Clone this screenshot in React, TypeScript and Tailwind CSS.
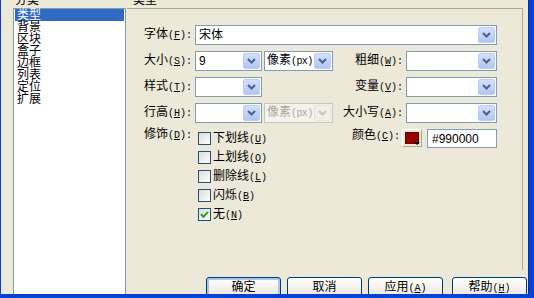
import React from "react";

function Mn({ t, k, colon = true }: { t: string; k: string; colon?: boolean }) {
  return (
    <span className="whitespace-nowrap">
      {t}
      <span className="font-['Liberation_Mono',monospace] text-[10px]">
        (<span className="underline">{k}</span>){colon ? ":" : ""}
      </span>
    </span>
  );
}

function Chevron({ color }: { color: string }) {
  return (
    <svg width="9" height="6" viewBox="0 0 9 6">
      <path d="M1 1 L4.5 4.5 L8 1" fill="none" stroke={color} strokeWidth="2" />
    </svg>
  );
}

function Select({ cls, value, disabled }: { cls: string; value?: React.ReactNode; disabled?: boolean }) {
  return (
    <div
      className={`${cls} h-[20px] flex border ${
        disabled ? "border-[#C9C7BA] bg-[#F4F3EE]" : "border-[#7F9DB9] bg-white"
      }`}
    >
      <div
        className={`flex-1 min-w-0 flex items-center pl-[3px] text-[12px] leading-[12px] overflow-hidden whitespace-nowrap ${
          disabled ? "text-[#ACA899]" : "text-black"
        }`}
      >
        {value}
      </div>
      <div
        className={`w-[17px] shrink-0 m-[1px] rounded-[2px] flex items-center justify-center ${
          disabled
            ? "bg-[#F1F0EA] border border-[#E4E3DC]"
            : "bg-gradient-to-b from-[#D3E0FD] to-[#B1C6F6] border border-[#BBCDF7]"
        }`}
      >
        <Chevron color={disabled ? "#C9C7BA" : "#4D6185"} />
      </div>
    </div>
  );
}

function Label({ t, k }: { t: string; k: string }) {
  return (
    <div className="w-[66px] pr-[1px] text-right text-[12px] leading-[12px] whitespace-nowrap">
      <Mn t={t} k={k} />
    </div>
  );
}

function RLabel({ t, k, cls }: { t: string; k: string; cls: string }) {
  return (
    <div className={`${cls} text-right text-[12px] leading-[12px] whitespace-nowrap`}>
      <Mn t={t} k={k} />
    </div>
  );
}

function Check({ label, k, checked }: { label: string; k: string; checked?: boolean }) {
  return (
    <div className="h-[19px] flex items-center">
      <div className="w-[13px] h-[13px] border border-[#1C5180] bg-gradient-to-br from-[#DCDCD7] to-white flex items-center justify-center">
        {checked && (
          <svg width="9" height="9" viewBox="0 0 9 9">
            <path d="M1 4.2 L3.5 6.8 L8 1.8" fill="none" stroke="#21A121" strokeWidth="2" />
          </svg>
        )}
      </div>
      <span className="ml-[2px] text-[12px] leading-[12px]">
        <Mn t={label} k={k} colon={false} />
      </span>
    </div>
  );
}

function Btn({ children, def, cls }: { children: React.ReactNode; def?: boolean; cls: string }) {
  return (
    <div
      className={`${cls} w-[75px] h-[23px] shrink-0 rounded-[3px] border border-[#003C74] bg-gradient-to-b from-white to-[#E6E4DA] flex justify-center pt-[3px] text-[12px] leading-[12px] ${
        def ? "shadow-[inset_0_0_0_2px_#A9C4EF]" : ""
      }`}
    >
      {children}
    </div>
  );
}

const units = (
  <span className="ml-[-1px]">
    像素<span className="font-['Liberation_Mono',monospace] text-[10px] tracking-[-0.6px]">(px)</span>
  </span>
);

export default function App() {
  const items = ["类型", "背景", "区块", "盒子", "边框", "列表", "定位", "扩展"];
  return (
    <div className="w-[534px] h-[298px] bg-[#ECE9D8] flex flex-col overflow-hidden text-black font-['Liberation_Sans','Noto_Sans_CJK_SC',sans-serif]">
      <div className="flex h-[294px]">
        <div className="w-[1px] bg-[#0842D5]" />
        <div className="flex-1 flex">
          {/* left column */}
          <div className="w-[125px] pl-[12px] flex flex-col">
            <div className="h-[12px] mt-[-6px] mb-[2px] pl-[2px] text-[12px] leading-[12px]">分类</div>
            <div className="flex-1 mb-[-2px] border border-[#7F9DB9] bg-white">
              {items.map((it, i) => (
                <div
                  key={it}
                  className={`h-[12px] mx-[1px] pl-[2px] text-[12px] leading-[12px] ${
                    i === 0 ? "bg-[#316AC5] text-white" : "text-black"
                  }`}
                >
                  {it}
                </div>
              ))}
            </div>
          </div>
          {/* right column */}
          <div className="flex-1 flex flex-col">
            <div className="h-[12px] mt-[-6px] mb-[2px] pl-[7px] text-[12px] leading-[12px]">类型</div>
            <div className="ml-[1px] w-[396px] h-[262px] border-t border-r border-[#ACA899] pt-[16px] flex flex-col gap-[6px]">
              <div className="flex items-center h-[20px]">
                <Label t="字体" k="F" />
                <Select cls="ml-[2px] w-[302px]" value="宋体" />
              </div>
              <div className="flex items-center h-[20px]">
                <Label t="大小" k="S" />
                <Select cls="ml-[2px] w-[67px]" value="9" />
                <Select cls="ml-[2px] w-[69px]" value={units} />
                <RLabel t="粗细" k="W" cls="w-[70px]" />
                <Select cls="ml-[3px] w-[91px]" />
              </div>
              <div className="flex items-center h-[20px]">
                <Label t="样式" k="T" />
                <Select cls="ml-[2px] w-[67px]" />
                <div className="w-[71px]" />
                <RLabel t="变量" k="V" cls="w-[70px]" />
                <Select cls="ml-[3px] w-[91px]" />
              </div>
              <div className="flex items-center h-[20px]">
                <Label t="行高" k="H" />
                <Select cls="ml-[2px] w-[67px]" />
                <Select cls="ml-[2px] w-[69px]" value={units} disabled />
                <RLabel t="大小写" k="A" cls="w-[70px]" />
                <Select cls="ml-[3px] w-[91px]" />
              </div>
              <div className="flex items-start">
                <div className="h-[12px] flex items-center">
                  <Label t="修饰" k="D" />
                </div>
                <div className="ml-[5px] w-[135px] flex flex-col">
                  <Check label="下划线" k="U" />
                  <Check label="上划线" k="O" />
                  <Check label="删除线" k="L" />
                  <Check label="闪烁" k="B" />
                  <Check label="无" k="N" checked />
                </div>
                <div className="h-[14px] flex items-center">
                  <RLabel t="颜色" k="C" cls="w-[67px]" />
                </div>
                <div className="ml-[2px] w-[20px] h-[18px] relative border border-t-white border-l-white border-r-[#ACA899] border-b-[#ACA899] bg-[#ECE9D8]">
                  <div className="ml-[2px] mt-[2px] w-[14px] h-[12px] bg-[#990000] border border-[#6B0000]" />
                  <div className="absolute right-[1px] bottom-[1px] w-0 h-0 border-l-[3px] border-r-[3px] border-t-[3px] border-l-transparent border-r-transparent border-t-black" />
                </div>
                <div className="ml-[5px] w-[70px] h-[19px] border border-[#7F9DB9] bg-white flex items-center pl-[4px] text-[12px] leading-[12px]">
                  #990000
                </div>
              </div>
            </div>
            <div className="mt-[7px] h-[17px] overflow-hidden flex items-start pl-[80px]">
              <Btn cls="" def>确定</Btn>
              <Btn cls="ml-[6px]">取消</Btn>
              <Btn cls="ml-[6px]">
                <Mn t="应用" k="A" colon={false} />
              </Btn>
              <Btn cls="ml-[9px]">
                <Mn t="帮助" k="H" colon={false} />
              </Btn>
            </div>
          </div>
        </div>
        <div className="w-[6px] bg-[#0842D5] border-l border-[#0628A8]" />
      </div>
      <div className="h-[4px] bg-[#0842D5]" />
    </div>
  );
}
